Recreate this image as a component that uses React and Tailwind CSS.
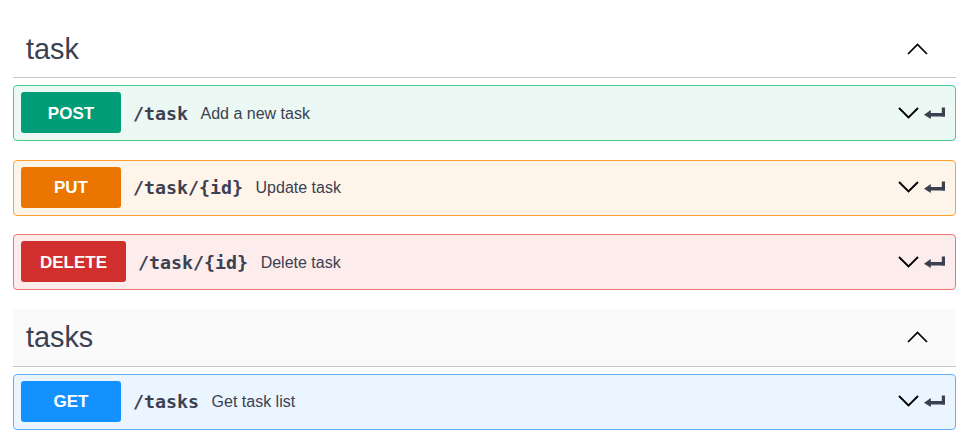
import React from "react";

const ops = {
  task: [
    { method: "POST", path: "/task", desc: "Add a new task", badge: "bg-[#009d77]", block: "border-[#49cc90] bg-[#ecf8f3]" },
    { method: "PUT", path: "/task/{id}", desc: "Update task", badge: "bg-[#ea7500]", block: "border-[#fca130] bg-[#fff4ea]" },
    { method: "DELETE", path: "/task/{id}", desc: "Delete task", badge: "bg-[#d12e2e]", block: "border-[#f07575] bg-[#fcecec]" },
  ],
  tasks: [
    { method: "GET", path: "/tasks", desc: "Get task list", badge: "bg-[#1391ff]", block: "border-[#61affe] bg-[#ebf5ff]" },
  ],
};

function ChevronUp() {
  return (
    <svg width="21" height="12" viewBox="0 0 21 12" className="block">
      <polyline points="1,11 10.5,1.5 20,11" fill="none" stroke="#000" strokeWidth="1.7" strokeLinejoin="miter" />
    </svg>
  );
}

function ChevronDown() {
  return (
    <svg width="21" height="12" viewBox="0 0 21 12" className="block">
      <polyline points="1,1 10.5,10.5 20,1" fill="none" stroke="#000" strokeWidth="1.9" strokeLinejoin="miter" />
    </svg>
  );
}

function EnterIcon() {
  return (
    <svg width="21" height="12" viewBox="0 0 21 12" className="block">
      <rect x="17.8" y="0.5" width="3.2" height="9" fill="#3b4151" />
      <rect x="4" y="6" width="17" height="3.5" fill="#3b4151" />
      <polygon points="0,7.7 6.8,3 6.8,12" fill="#3b4151" />
    </svg>
  );
}

function Heading({ title, hover }) {
  return (
    <div
      className={`flex h-[58px] items-center justify-between border-b border-[#c4c6cb] pl-[13px] pr-[28px] ${hover ? "bg-[#fafafa]" : "bg-white"}`}
    >
      <span className="mt-[2px] text-[28.8px] text-[#3b4151] [font-family:'Liberation_Sans',Arial,sans-serif]">{title}</span>
      <ChevronUp />
    </div>
  );
}

function Op({ op }) {
  return (
    <div className={`mb-[18.5px] flex items-center rounded-[4px] border pt-[6px] pb-[7px] pl-[7px] pr-[10px] ${op.block}`}>
      <div
        className={`flex h-[41px] min-w-[100px] items-center justify-center rounded-[3px] px-[19px] pt-[2px] text-[17px] font-bold text-white [font-family:'Liberation_Sans',Arial,sans-serif] ${op.badge}`}
      >
        {op.method}
      </div>
      <span className="ml-[12px] mt-[2px] text-[18.3px] font-bold text-[#3b4151] [font-family:'DejaVu_Sans_Mono',monospace]">
        {op.path}
      </span>
      <span className="ml-[12.5px] mt-[2px] flex-1 text-[16px] text-[#3b4151] [font-family:'Liberation_Sans',Arial,sans-serif]">
        {op.desc}
      </span>
      <div className="flex items-center gap-[5px]">
        <ChevronDown />
        <EnterIcon />
      </div>
    </div>
  );
}

export default function App() {
  return (
    <div className="min-h-[441px] w-[966px] bg-white pt-[20px]">
      <div className="ml-[13px] w-[943px]">
        <div>
          <Heading title="task" />
          <div className="mt-[7px]">
            {ops.task.map((op) => (
              <Op key={op.method} op={op} />
            ))}
          </div>
        </div>
        <div className="mt-[1px]">
          <Heading title="tasks" hover />
          <div className="mt-[7px]">
            {ops.tasks.map((op) => (
              <Op key={op.method} op={op} />
            ))}
          </div>
        </div>
      </div>
    </div>
  );
}
